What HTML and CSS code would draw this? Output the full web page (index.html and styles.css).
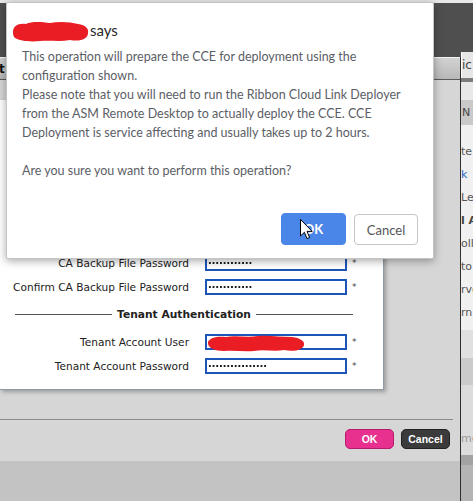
FILE: index.html
```html
<!DOCTYPE html>
<html>
<head>
<meta charset="utf-8">
<link rel="stylesheet" href="styles.css">
</head>
<body>
<div class="screen">
  <div class="topline"></div>
  <div class="stage">
    <div class="left">
      <div class="darkband"></div>
      <div class="modal">
        <div class="modal-head"><span class="modal-title">t</span></div>
        <div class="modal-body">
          <div class="form-panel">
            <div class="row">
              <span class="label">CA Backup File Password</span>
              <span class="field"><span class="dots" style="width:44px"></span></span>
              <span class="req">*</span>
            </div>
            <div class="row">
              <span class="label">Confirm CA Backup File Password</span>
              <span class="field"><span class="dots" style="width:44px"></span></span>
              <span class="req">*</span>
            </div>
            <div class="sep">
              <span class="sep-line"></span>
              <span class="sep-text">Tenant Authentication</span>
              <span class="sep-line"></span>
            </div>
            <div class="row">
              <span class="label">Tenant Account User</span>
              <span class="field"></span>
              <span class="req">*</span>
              <svg class="scribble scribble-user" width="100" height="19" viewBox="0 0 100 19">
                <path d="M2 8 C4 3 12 2 20 3 C30 1 40 4 52 2 C64 1 74 3 86 3 C94 4 99 7 98 11 C97 16 88 18 78 16 C68 18 58 15 48 17 C38 18 28 16 18 17 C9 17 1 14 2 8 Z" fill="#ea1c24"/>
              </svg>
            </div>
            <div class="row">
              <span class="label">Tenant Account Password</span>
              <span class="field"><span class="dots" style="width:59px"></span></span>
              <span class="req">*</span>
            </div>
          </div>
          <div class="modal-foot">
            <button class="btn btn-ok">OK</button>
            <button class="btn btn-cancel">Cancel</button>
          </div>
        </div>
      </div>
      <div class="underbar"></div>
    </div>
    <div class="behind">
      <div class="b-dark"></div>
      <div class="b-title">ic</div>
      <div class="b-rule"></div>
      <div class="b-gap"></div>
      <div class="b-colhead">N</div>
      <div class="b-list">
        <div class="b-item">te</div>
        <div class="b-item b-link">k</div>
        <div class="b-item">Le</div>
        <div class="b-item b-bold">l A</div>
        <div class="b-item">olle</div>
        <div class="b-item">to</div>
        <div class="b-item">rve</div>
        <div class="b-item">rn</div>
      </div>
      <div class="b-mid"></div>
      <div class="b-foot">me</div>
      <div class="b-band"></div>
      <div class="b-end"></div>
    </div>
  </div>

  <div class="alert">
    <div class="alert-title">
      <svg class="scribble" width="78" height="23" viewBox="0 0 78 23">
        <path d="M1 12 C1 6 6 3 14 4 C20 1 30 2 38 3 C48 1 58 2 66 4 C74 5 77 9 76 13 C76 19 68 22 58 20 C48 22 38 20 28 21 C18 22 8 21 3 18 C1 16 1 14 1 12 Z" fill="#ea1c24"/>
      </svg>
      <span class="says">says</span>
    </div>
    <div class="alert-msg">
      <p>This operation will prepare the CCE for deployment using the configuration shown.<br>Please note that you will need to run the Ribbon Cloud Link Deployer from the ASM Remote Desktop to actually deploy the CCE. CCE Deployment is service affecting and usually takes up to 2 hours.</p>
      <p>Are you sure you want to perform this operation?</p>
    </div>
    <div class="alert-actions">
      <button class="abtn abtn-ok">OK</button>
      <button class="abtn abtn-cancel">Cancel</button>
    </div>
    <svg class="cursor" width="13" height="21" viewBox="0 0 13 21">
      <path d="M0.5 0.5 L0.5 17 L4.4 13.3 L7 19.6 L9.6 18.5 L7 12.4 L12.2 12.4 Z" fill="#fff" stroke="#000" stroke-width="1" stroke-linejoin="round"/>
    </svg>
  </div>
</div>
</body>
</html>
```
FILE: styles.css
```css
* { box-sizing: border-box; }
html, body { margin: 0; padding: 0; }
body {
  width: 473px;
  height: 501px;
  overflow: hidden;
  background: #c3c3c3;
  font-family: "DejaVu Sans", Verdana, sans-serif;
}
.screen { position: relative; width: 473px; height: 501px; }
.topline { height: 3px; background: #e9e9e9; }
.stage {
  display: grid;
  grid-template-columns: 461px 1fr;
  height: 498px;
}
.left { display: flex; flex-direction: column; }
.darkband { height: 54px; background: #4f4f4f; }
.modal {
  background: #d6d6d6;
  border-right: 1px solid #2e2e2e;
  display: flex;
  flex-direction: column;
}
.modal-head {
  height: 23px;
  border-top: 1px solid #f4f4f4;
  border-bottom: 1px solid #5a5a5a;
  background: linear-gradient(#d2d2d2, #b8b8b8);
  display: flex;
  align-items: center;
}
.modal-title { font-weight: bold; font-size: 12px; color: #111; margin-left: -1px; }
.modal-body { display: flex; flex-direction: column; }
.form-panel {
  margin-top: 20px;
  width: 384px;
  height: 290px;
  background: #fff;
  border-right: 1px solid #8e9aa6;
  border-bottom: 1px solid #8e9aa6;
  box-shadow: 2px 2px 4px rgba(0,0,0,0.28);
  padding-top: 151px;
}
.row {
  position: relative;
  height: 24px;
  display: grid;
  grid-template-columns: 189px 142px 10px;
  column-gap: 16px;
  align-items: center;
}
.row .req { margin-left: -11px; }
.label {
  text-align: right;
  font-size: 10.6px;
  color: #222;
  white-space: nowrap;
}
.field {
  height: 16px;
  border: 2px solid #1b55b9;
  background: #fff;
  display: flex;
  align-items: center;
  padding-left: 1px;
}
.dots {
  height: 4px;
  background: radial-gradient(circle, #1a1a1a 1px, transparent 1.4px) 0 50% / 3.7px 4px repeat-x;
}
.req { font-size: 9px; color: #444; }
.sep {
  height: 31px;
  display: flex;
  align-items: center;
  gap: 5px;
  padding-left: 15px;
  width: 353px;
}
.sep-line { flex: 1; height: 1px; background: #555; }
.sep-text { font-weight: bold; font-size: 10.7px; color: #222; }
.scribble-user { position: absolute; left: 206px; top: 4px; }
.modal-foot {
  margin-top: 29px;
  margin-right: 7px;
  border-top: 1px solid #8a8a8a;
  padding: 9px 3px 12px 0;
  display: flex;
  justify-content: flex-end;
  gap: 7px;
}
.btn {
  height: 20px;
  width: 49px;
  border-radius: 5px;
  font-family: "Liberation Sans", Arial, sans-serif;
  font-weight: bold;
  font-size: 10.5px;
  color: #fff;
  padding: 0;
}
.btn-ok { background: #e8308f; border: 1px solid #b51a6c; }
.btn-cancel { background: #3b3b3b; border: 1px solid #222; }
.underbar { flex: 1; background: #c3c3c3; border-right: 1px solid #2e2e2e; }

.behind {
  display: flex;
  flex-direction: column;
  font-size: 11px;
  color: #555;
  overflow: hidden;
  white-space: nowrap;
}
.b-dark { height: 49px; background: #4f4f4f; }
.b-title { height: 26px; background: #e6e6e6; font-size: 12px; line-height: 26px; color: #444; border-left: 1px solid #fff; }
.b-rule { height: 4px; background: #7c7c7c; }
.b-gap { height: 18px; background: #e8e8e8; }
.b-colhead { height: 25px; background: #c9c9c9; line-height: 25px; padding-left: 1px; color: #444; }
.b-list { background: #f0f0f0; padding-top: 15px; height: 205px; }
.b-item { height: 23px; line-height: 23px; }
.b-link { color: #2a66c2; }
.b-bold { font-weight: bold; color: #444; }
.b-mid { height: 92px; background: linear-gradient(#e0e0e0 0, #e0e0e0 30%, #cbcbcb 30%, #cbcbcb 60%, #dcdcdc 60%); }
.b-foot { height: 33px; background: #dcdcdc; line-height: 33px; color: #999; }
.b-band { height: 10px; background: #a3a3a3; }
.b-end { flex: 1; background: #b4b4b4; }

.alert {
  position: absolute;
  left: 6px;
  top: 2px;
  width: 428px;
  height: 257px;
  background: #fff;
  border: 1px solid #c4c4c4;
  border-radius: 2px;
  box-shadow: 0 2px 8px rgba(0,0,0,0.35);
  font-family: Lato, "Open Sans", sans-serif;
  display: flex;
  flex-direction: column;
}
.alert-title {
  margin-top: 16px;
  padding-left: 5px;
  height: 24px;
  display: flex;
  align-items: center;
}
.says { font-size: 15px; color: #2a2a2a; margin-top: -3px; }
.alert-msg {
  margin-top: 4px;
  padding-left: 15px;
  font-size: 12.5px;
  line-height: 19px;
  color: #5b5e66;
  width: 400px;
}
.alert-msg p { margin: 0 0 19px 0; }
.alert-actions {
  margin-top: auto;
  padding: 0 15px 13px 0;
  display: flex;
  justify-content: flex-end;
  gap: 8px;
}
.abtn {
  height: 32px;
  width: 65px;
  border-radius: 4px;
  font-family: Lato, "Open Sans", sans-serif;
  font-size: 13px;
  padding: 0;
}
.abtn-ok { background: #4a86e8; border: 1px solid #4a86e8; color: #fff; font-weight: bold; }
.abtn-cancel { background: #fff; border: 1px solid #c6c6c6; color: #555; height: 31px; width: 64px; margin-top: 1px; }
.cursor { position: absolute; left: 293px; top: 216px; }
```
